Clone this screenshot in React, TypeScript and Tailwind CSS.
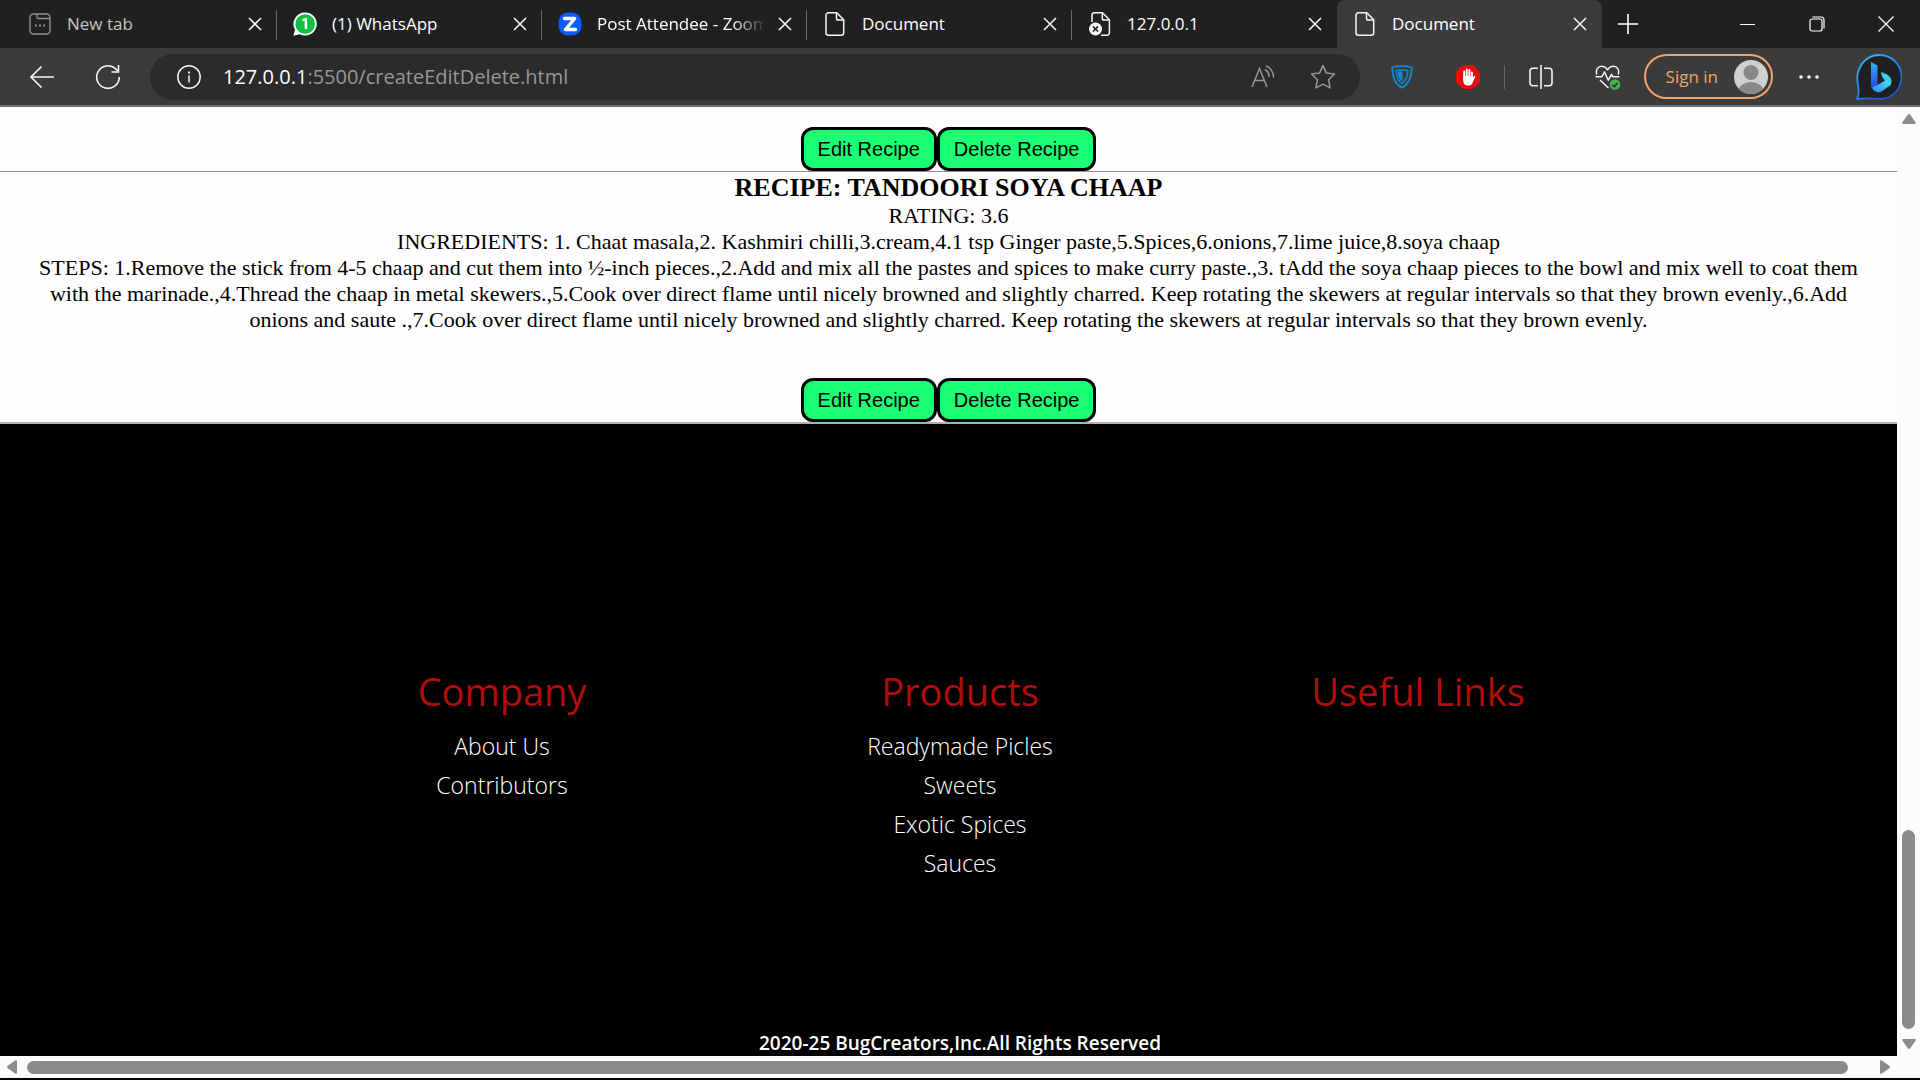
import type { ReactNode } from "react";

const NewTabIcon = () => (
  <svg width="24" height="24" viewBox="0 0 24 24" fill="none" stroke="#8f8f8f" strokeWidth="1.4">
    <rect x="2" y="2" width="20" height="20" rx="3.5" />
    <path d="M9 2v3.2a1.3 1.3 0 0 0 1.3 1.3H22" />
    <path d="M7 13.5h2M11 13.5h2M15 13.5h2" strokeWidth="2" />
  </svg>
);

const WhatsAppIcon = () => (
  <svg width="24" height="24" viewBox="0 0 24 24">
    <path d="M12.2.4a11.6 11.6 0 1 1-5.4 21.9L.4 23.8l1.6-6A11.6 11.6 0 0 1 12.200.4z" fill="#fff" />
    <circle cx="12.200" cy="12" r="9.800" fill="#0fc143" />
    <path d="M9.600 8.400 12.900 7v10" fill="none" stroke="#fff" strokeWidth="2.400" strokeLinejoin="round" />
  </svg>
);

const ZoomIcon = () => (
  <svg width="24" height="24" viewBox="0 0 24 24">
    <rect x="0.500" y="0.500" width="23" height="23" rx="9.500" fill="#0b5cff" />
    <path d="M6.500 6.500h10.200L7.500 17.500H17.500" fill="none" stroke="#fff" strokeWidth="3.400" strokeLinejoin="round" strokeLinecap="round" />
  </svg>
);

const PageIcon = () => (
  <svg width="24" height="24" viewBox="0 0 24 24" fill="none" stroke="#f5f5f5" strokeWidth="1.500" strokeLinejoin="round">
    <path d="M5.500.8h8.300l6.900 6.900v13a2.500 2.500 0 0 1-2.500 2.500H5.500A2.500 2.500 0 0 1 3 20.700V3.300A2.500 2.500 0 0 1 5.500.8z" />
    <path d="M13.500 1v5.200A1.800 1.800 0 0 0 15.300 8h5.200" />
  </svg>
);

const PageErrorIcon = () => (
  <svg width="24" height="24" viewBox="0 0 24 24" fill="none" stroke="#f5f5f5" strokeWidth="1.500" strokeLinejoin="round">
    <path d="M4 10V3.300A2.500 2.500 0 0 1 6.500.8h8l6.900 6.900v13a2.500 2.500 0 0 1-2.500 2.500H13" />
    <path d="M14.300 1v5.200A1.800 1.800 0 0 0 16.100 8h5.200" />
    <circle cx="7.500" cy="17" r="6.500" fill="#f5f5f5" stroke="none" />
    <path d="m5 14.500 5 5m0-5-5 5" stroke="#202020" strokeWidth="1.700" />
  </svg>
);

const CloseGlyph = () => (
  <svg width="14" height="14" viewBox="0 0 14 14" fill="none" stroke="#f2f2f2" strokeWidth="1.600">
    <path d="m1 1 12 12M13 1 1 13" />
  </svg>
);

type TabProps = { icon: ReactNode; title: string; active?: boolean; muted?: boolean; fade?: boolean; divider?: boolean };

function Tab({ icon, title, active, muted, fade, divider }: TabProps) {
  return (
    <div
      className={
        "relative flex h-12 w-[265px] min-w-0 items-center pr-[15px] pl-[16px] " + (active ? "rounded-t-lg bg-[#3b3b3b]" : "")
      }
    >
      <button className="flex min-w-0 flex-1 items-center gap-[15px] text-left">
        <span className="shrink-0">{icon}</span>
        <span
          className={
            "flex-1 overflow-hidden text-[17px] leading-6 whitespace-nowrap " +
            (muted ? "text-[#c4c4c4] " : "text-white ") +
            (fade ? "mr-[12px] [mask-image:linear-gradient(to_right,black_80%,transparent)]" : "")
          }
        >
          {title}
        </span>
      </button>
      <button aria-label={"Close " + title} className="shrink-0">
        <CloseGlyph />
      </button>
      {divider && <span className="absolute top-[10px] right-0 h-[30px] w-px bg-[#6a6a6a]" />}
    </div>
  );
}

function TabStrip() {
  return (
    <div className="flex h-12 bg-[#202020] pl-[12px]">
      <Tab icon={<NewTabIcon />} title="New tab" muted divider />
      <Tab icon={<WhatsAppIcon />} title="(1) WhatsApp" divider />
      <Tab icon={<ZoomIcon />} title="Post Attendee - Zoom" fade divider />
      <Tab icon={<PageIcon />} title="Document" divider />
      <Tab icon={<PageErrorIcon />} title="127.0.0.1" />
      <Tab icon={<PageIcon />} title="Document" active />
      <button aria-label="New tab" className="flex w-[52px] items-center justify-center">
        <svg width="22" height="22" viewBox="0 0 22 22" stroke="#fff" strokeWidth="1.600">
          <path d="M11 1v20M1 11h20" />
        </svg>
      </button>
      <div className="ml-auto flex">
        <button aria-label="Minimize" className="flex w-[69px] items-center justify-center">
          <svg width="15" height="15" viewBox="0 0 15 15" stroke="#fff" strokeWidth="1">
            <path d="M0 7.500h15" />
          </svg>
        </button>
        <button aria-label="Restore" className="flex w-[69px] items-center justify-center">
          <svg width="16" height="16" viewBox="0 0 16 16" fill="none" stroke="#fff" strokeWidth="1.200">
            <rect x="1" y="3" width="12" height="12" rx="2" />
            <path d="M3.500 1H12a3 3 0 0 1 3 3v8.500" />
          </svg>
        </button>
        <button aria-label="Close window" className="flex w-[69px] items-center justify-center">
          <svg width="16" height="16" viewBox="0 0 16 16" stroke="#fff" strokeWidth="1.200">
            <path d="m.5.5 15 15M15.500.5l-15 15" />
          </svg>
        </button>
      </div>
    </div>
  );
}

function Toolbar() {
  return (
    <div className="flex h-[59px] items-center border-b-2 border-[#6e6e6e] bg-[#3b3b3b] pr-[18px]">
      <button aria-label="Back" className="ml-[29px] shrink-0">
        <svg width="26" height="24" viewBox="0 0 26 24" fill="none" stroke="#f5f5f5" strokeWidth="1.600">
          <path d="M12.500 1.500 2 12l10.500 10.500M2 12h23" />
        </svg>
      </button>
      <button aria-label="Refresh" className="ml-[40px] shrink-0">
        <svg width="26" height="26" viewBox="0 0 26 26" fill="none" stroke="#f5f5f5" strokeWidth="1.600">
          <path d="M24.300 13A11.300 11.300 0 1 1 20.500 4.600L23.500 7.500" />
          <path d="M23.500 1v7h-7" />
        </svg>
      </button>
      <div className="ml-[29px] flex h-[46px] min-w-0 flex-1 items-center rounded-full bg-[#2b2b2b] pr-[24px] pl-[27px]">
        <button aria-label="Site information" className="shrink-0">
          <svg width="24" height="24" viewBox="0 0 24 24" fill="none" stroke="#f5f5f5" strokeWidth="1.500">
            <circle cx="12" cy="12" r="11.200" />
            <path d="M12 10.500v7" />
            <path d="M12 6.500v2" strokeWidth="1.800" />
          </svg>
        </button>
        <a href="#address" className="ml-[22px] flex-1 truncate text-[20px] leading-7 text-[#979797]">
          <span className="text-white">127.0.0.1</span>:5500/createEditDelete.html
        </a>
        <button aria-label="Read aloud" className="shrink-0">
          <svg width="24" height="24" viewBox="0 0 24 24" fill="none" stroke="#979797" strokeWidth="1.500">
            <path d="m1 22 7.500-18.500L16 22M3.500 15.500h10" />
            <path d="M14 4.500a8 8 0 0 1 4 7.500M15 1a12 12 0 0 1 7.500 11.500" />
          </svg>
        </button>
        <button aria-label="Add to favorites" className="ml-[35px] shrink-0">
          <svg width="26" height="26" viewBox="0 0 24 24" fill="none" stroke="#979797" strokeWidth="1.400" strokeLinejoin="round">
            <path d="m12 1.500 3.200 6.900 7.400.9-5.400 5.200 1.300 7.600L12 18.500l-6.500 3.600 1.300-7.600L1.400 9.300l7.400-.9z" />
          </svg>
        </button>
      </div>
      <button aria-label="VPN extension" className="ml-[31px] shrink-0">
        <svg width="22" height="24" viewBox="0 0 22 24" fill="none">
          <path d="M11 1.200c4 0 7 .4 9.800 1.300-.2 10-2.800 16.800-9.800 20.300C4 19.300 1.400 12.500 1.200 2.500 4 1.600 7 1.200 11 1.200z" stroke="#0a8bd6" strokeWidth="1.800" />
          <path d="M11 5c2.400 0 4.200.2 5.900.6-.3 6-1.900 10-5.900 12.900-4-2.900-5.600-6.900-5.900-12.900C6.800 5.200 8.600 5 11 5z" stroke="#0a8bd6" strokeWidth="1.300" />
          <path d="M11.500 6.500v10c-3.200-2-4.700-5-5-9.600 1.500-.3 3-.4 5-.4z" fill="#0a8bd6" />
        </svg>
      </button>
      <button aria-label="Ad blocker" className="ml-[43px] shrink-0">
        <svg width="24" height="24" viewBox="0 0 24 24">
          <path d="M7 0h10l7 7v10l-7 7H7l-7-7V7z" fill="#e80c0c" />
          <g stroke="#fff" strokeWidth="2" strokeLinecap="round">
            <path d="M8.200 14V6.500M10.800 12V4.500M13.400 12V5M15.900 14V7.500" />
          </g>
          <path d="M7.200 11h9.700v2l1-1.800c.7-.8 1.700-.3 1.300.7l-2.700 6c-.8 1.800-2.200 2.600-4.200 2.600-3.400 0-5.100-2-5.100-5z" fill="#fff" />
        </svg>
      </button>
      <span className="ml-[24px] h-6 w-px shrink-0 bg-[#6a6a6a]" />
      <button aria-label="Split screen" className="ml-[24px] shrink-0">
        <svg width="24" height="24" viewBox="0 0 24 24" fill="none" stroke="#f5f5f5" strokeWidth="1.600">
          <path d="M9 3.300H4A3 3 0 0 0 1 6.300v11.400a3 3 0 0 0 3 3h5M15 3.300h5a3 3 0 0 1 3 3v11.400a3 3 0 0 1-3 3h-5M12 0v24" />
        </svg>
      </button>
      <button aria-label="Browser essentials" className="ml-[42px] shrink-0">
        <svg width="26" height="26" viewBox="0 0 26 26" fill="none" stroke="#f5f5f5" strokeWidth="1.500" strokeLinejoin="round">
          <path d="M1.800 10.500C.3 5.800 3 2.300 6.500 2.300c3 0 4.800 1.600 6 3.500 1.200-1.900 3-3.500 6-3.500 3.500 0 6.200 3.500 4.700 8.200" />
          <path d="M.5 12.800h6.300l2.700-5 3.700 8.500 3.300-6 1.300 2.500h6.700" />
          <path d="m5 16 8.500 8" />
          <circle cx="20" cy="20.500" r="5.300" fill="#4caf50" stroke="none" />
          <path d="m17.300 20.700 2 2 3.500-3.700" stroke="#1d3b1e" />
        </svg>
      </button>
      <button className="ml-[23px] flex h-[45px] shrink-0 items-center gap-[16px] rounded-full border-2 border-[#f3a366] pr-[3px] pl-[20px] text-[17px] text-[#f3a366]">
        Sign in
        <svg width="34" height="34" viewBox="0 0 34 34">
          <clipPath id="avatar">
            <circle cx="17" cy="17" r="17" />
          </clipPath>
          <g clipPath="url(#avatar)">
            <rect width="34" height="34" fill="#d2d0ce" />
            <circle cx="17" cy="12.500" r="7.500" fill="#8a8886" />
            <ellipse cx="17" cy="31" rx="12.500" ry="9" fill="#8a8886" />
          </g>
        </svg>
      </button>
      <button aria-label="Settings and more" className="ml-[26px] shrink-0">
        <svg width="20" height="6" viewBox="0 0 20 6" fill="#f5f5f5">
          <circle cx="2" cy="3" r="1.800" />
          <circle cx="10" cy="3" r="1.800" />
          <circle cx="18" cy="3" r="1.800" />
        </svg>
      </button>
      <button aria-label="Bing chat" className="ml-[37px] shrink-0">
        <svg width="46" height="46" viewBox="0 0 46 46">
          <defs>
            <linearGradient id="ring" x1="0" y1="0" x2="0.700" y2="1">
              <stop offset="0" stopColor="#2fc3ee" />
              <stop offset="0.500" stopColor="#2b8df0" />
              <stop offset="1" stopColor="#1b4fd8" />
            </linearGradient>
            <linearGradient id="stem" x1="0" y1="0" x2="0" y2="1">
              <stop offset="0" stopColor="#37b5f6" />
              <stop offset="1" stopColor="#2340e6" />
            </linearGradient>
            <linearGradient id="bowl" x1="0" y1="1" x2="1" y2="0">
              <stop offset="0" stopColor="#2c8df5" />
              <stop offset="1" stopColor="#4be0f5" />
            </linearGradient>
          </defs>
          <path d="M23.500 1a22 22 0 1 1 0 44C18 44.500 12 43.500 1 45c2.500-5 2-9 1-14C-1.500 14 9.500 1 23.500 1z" fill="#202020" stroke="url(#ring)" strokeWidth="1.800" />
          <path d="m15 8 6.500 3.500V31l-4.500 4c-1.300-.8-2-2-2-3.500z" fill="url(#stem)" />
          <path d="M25 18c5.500 1.500 10.500 4.500 10.500 9.500 0 1.800-.6 3.200-1.700 4.500l-5.500-6c-1.500-2-3-5-3.300-8z" fill="#35cfe8" />
          <path d="m16 33.500 5.500-2.500 8.500-5c3 .5 5 3 4 5.500l-8.500 6c-3.500 1.500-8 .5-9.500-4z" fill="url(#bowl)" />
        </svg>
      </button>
    </div>
  );
}

function RecipeActions() {
  return (
    <div className="flex justify-center">
      <button className="h-11 rounded-xl border-3 border-black bg-[#1aff73] px-[14px] text-[20px] leading-6 text-black [font-family:'Liberation_Sans',sans-serif]">
        Edit Recipe
      </button>
      <button className="h-11 rounded-xl border-3 border-black bg-[#1aff73] px-[14px] text-[20px] leading-6 text-black [font-family:'Liberation_Sans',sans-serif]">
        Delete Recipe
      </button>
    </div>
  );
}

const columns = [
  { title: "Company", links: ["About Us", "Contributors"] },
  { title: "Products", links: ["Readymade Picles", "Sweets", "Exotic Spices", "Sauces"] },
  { title: "Useful Links", links: [] },
];

function Page() {
  return (
    <div className="flex min-w-0 flex-1 flex-col bg-[#fffdfd]">
      <main className="pt-5 text-center text-[22px] leading-[26px] text-black [font-family:'Liberation_Serif',serif]">
        <RecipeActions />
        <hr className="border-[#8f8f8f]" />
        <h2 className="pt-px text-[26px] leading-[30px] font-bold">RECIPE: TANDOORI SOYA CHAAP</h2>
        <p>RATING: 3.6</p>
        <p>
          INGREDIENTS: 1. Chaat masala,2. Kashmiri chilli,3.cream,4.1 tsp Ginger paste,5.Spices,6.onions,7.lime juice,8.soya chaap
        </p>
        <p className="mb-[45px]">
          STEPS: 1.Remove the stick from 4-5 chaap and cut them into ½-inch pieces.,2.Add and mix all the pastes and spices to make
          curry paste.,3. tAdd the soya chaap pieces to the bowl and mix well to coat them
          <br />
          with the marinade.,4.Thread the chaap in metal skewers.,5.Cook over direct flame until nicely browned and slightly
          charred. Keep rotating the skewers at regular intervals so that they brown evenly.,6.Add
          <br />
          onions and saute .,7.Cook over direct flame until nicely browned and slightly charred. Keep rotating the skewers at
          regular intervals so that they brown evenly.
        </p>
        <RecipeActions />
        <hr className="border-t-2 border-[#b0b0b0]" />
      </main>
      <footer className="flex flex-1 flex-col bg-black pt-[239px] pl-[23px] text-center">
        <div className="grid grid-cols-3 px-[250px]">
          {columns.map((column) => (
            <section key={column.title}>
              <h3 className="mb-2 text-[38px] leading-[56px] text-[#b30c0c]">{column.title}</h3>
              <ul className="text-[23px] leading-[39px] font-light text-white">
                {column.links.map((link) => (
                  <li key={link}>
                    <a href="#footer">{link}</a>
                  </li>
                ))}
              </ul>
            </section>
          ))}
        </div>
        <p className="mt-auto text-[19px] leading-[26px] font-semibold text-white">2020-25 BugCreators,Inc.All Rights Reserved</p>
      </footer>
    </div>
  );
}

export default function App() {
  return (
    <div className="flex min-h-screen flex-col bg-black [font-family:'Open_Sans',sans-serif]">
      <header>
        <TabStrip />
        <Toolbar />
      </header>
      <div className="flex flex-1">
        <Page />
        <div className="flex w-[23px] shrink-0 flex-col items-center bg-[#fcfcfc] pt-[7px] pb-[7px]">
          <svg width="14" height="10" viewBox="0 0 14 10" fill="#8b8b8b">
            <path d="M5.800.8a1.500 1.500 0 0 1 2.400 0L13.700 8.500c.4.800 0 1.500-.9 1.500H1.200C.3 10-.1 9.300.3 8.500z" />
          </svg>
          <div className="flex w-[13px] flex-1 flex-col justify-end pb-[10px]">
            <div className="h-[199px] rounded-full bg-[#8b8b8b]" />
          </div>
          <svg width="14" height="10" viewBox="0 0 14 10" fill="#8b8b8b">
            <path d="M5.800 9.200a1.500 1.500 0 0 0 2.400 0l5.500-7.700c.4-.8 0-1.500-.9-1.500H1.200C.3 0-.1.700.3 1.500z" />
          </svg>
        </div>
      </div>
      <div className="mb-[2px] flex h-[22px] items-center bg-[#fcfcfc] pr-[30px] pl-[7px]">
        <svg width="10" height="14" viewBox="0 0 10 14" fill="#8b8b8b">
          <path d="M.8 5.800a1.500 1.500 0 0 0 0 2.400l7.700 5.500c.8.400 1.500 0 1.500-.9V1.200C10 .3 9.300-.1 8.500.3z" />
        </svg>
        <div className="mr-[32px] ml-[10px] h-[13px] flex-1 rounded-full bg-[#8b8b8b]" />
        <svg width="10" height="14" viewBox="0 0 10 14" fill="#8b8b8b">
          <path d="M9.200 5.800a1.500 1.500 0 0 1 0 2.400l-7.700 5.500c-.8.400-1.500 0-1.500-.9V1.200C0 .3.7-.1 1.500.3z" />
        </svg>
      </div>
    </div>
  );
}
